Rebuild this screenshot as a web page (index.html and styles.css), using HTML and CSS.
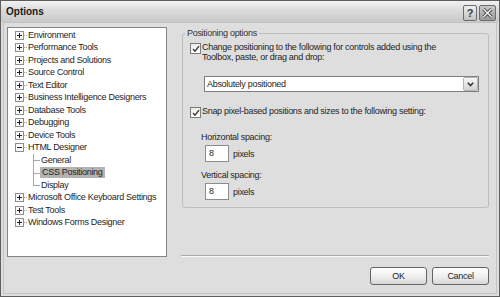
FILE: index.html
```html
<!DOCTYPE html>
<html>
<head>
    <meta charset="utf-8"/>
    <title>Options</title>
    <link rel="stylesheet" href="styles.css">
</head>
<body>
<div class="window">
    <div class="titlebar">
        <span class="title">Options</span>
        <div class="captionButtons">
            <span class="capBtn help">?</span>
            <span class="capBtn close">
                <svg width="11" height="10" viewBox="0 0 11 10">
                    <path d="M1.5 1 L9.5 9 M9.5 1 L1.5 9" stroke="#4a4a4a" stroke-width="3.2" fill="none"/>
                    <path d="M1.5 1 L9.5 9 M9.5 1 L1.5 9" stroke="#f4f4f4" stroke-width="1.4" fill="none"/>
                </svg>
            </span>
        </div>
    </div>

    <div class="client">
        <div class="mainRow">
            <div class="tree">
                <div class="node"><span class="exp plus"></span><span class="stub"></span><span class="label">Environment</span></div>
                <div class="node"><span class="exp plus"></span><span class="stub"></span><span class="label">Performance Tools</span></div>
                <div class="node"><span class="exp plus"></span><span class="stub"></span><span class="label">Projects and Solutions</span></div>
                <div class="node"><span class="exp plus"></span><span class="stub"></span><span class="label">Source Control</span></div>
                <div class="node"><span class="exp plus"></span><span class="stub"></span><span class="label">Text Editor</span></div>
                <div class="node"><span class="exp plus"></span><span class="stub"></span><span class="label">Business Intelligence Designers</span></div>
                <div class="node"><span class="exp plus"></span><span class="stub"></span><span class="label">Database Tools</span></div>
                <div class="node"><span class="exp plus"></span><span class="stub"></span><span class="label">Debugging</span></div>
                <div class="node"><span class="exp plus"></span><span class="stub"></span><span class="label">Device Tools</span></div>
                <div class="node"><span class="exp minus"></span><span class="stub"></span><span class="label">HTML Designer</span></div>
                <div class="node child"><span class="label">General</span></div>
                <div class="node child"><span class="label selected">CSS Positioning</span></div>
                <div class="node child last"><span class="label">Display</span></div>
                <div class="node"><span class="exp plus"></span><span class="stub"></span><span class="label">Microsoft Office Keyboard Settings</span></div>
                <div class="node"><span class="exp plus"></span><span class="stub"></span><span class="label">Test Tools</span></div>
                <div class="node"><span class="exp plus"></span><span class="stub"></span><span class="label">Windows Forms Designer</span></div>
            </div>

            <div class="pane">
                <fieldset class="group">
                    <legend>Positioning options</legend>
                    <div class="checkRow">
                        <span class="check"><svg width="8" height="8" viewBox="0 0 8 8"><path d="M1 4 L3 6.2 L7 1.2" stroke="#333" stroke-width="1.3" fill="none"/></svg></span>
                        <span class="checkText">Change positioning to the following for controls added using the<br>Toolbox, paste, or drag and drop:</span>
                    </div>
                    <div class="combo">
                        <span class="comboText">Absolutely positioned</span>
                        <span class="comboArrow"><svg width="7" height="5" viewBox="0 0 7 5"><path d="M0.8 0.8 L3.5 3.6 L6.2 0.8" stroke="#333" stroke-width="1.5" fill="none"/></svg></span>
                    </div>
                    <div class="checkRow second">
                        <span class="check"><svg width="8" height="8" viewBox="0 0 8 8"><path d="M1 4 L3 6.2 L7 1.2" stroke="#333" stroke-width="1.3" fill="none"/></svg></span>
                        <span class="checkText">Snap pixel-based positions and sizes to the following setting:</span>
                    </div>
                    <div class="fieldLabel">Horizontal spacing:</div>
                    <div class="spinRow">
                        <span class="numBox">8</span>
                        <span>pixels</span>
                    </div>
                    <div class="fieldLabel vertical">Vertical spacing:</div>
                    <div class="spinRow">
                        <span class="numBox">8</span>
                        <span>pixels</span>
                    </div>
                </fieldset>
                <div class="separator"></div>
            </div>
        </div>

        <div class="footer">
            <span class="button">OK</span>
            <span class="button">Cancel</span>
        </div>
    </div>
</div>
</body>
</html>
```

FILE: styles.css
```css
* {
    box-sizing: border-box;
}

body {
    margin: 0;
    background: #e0e0e0;
    font-family: "Liberation Sans", sans-serif;
    font-size: 9px;
    letter-spacing: -0.3px;
    color: #1e1e1e;
}

/* window frame */
.window {
    width: 500px;
    height: 297px;
    border: 1px solid #5e5e5e;
    background: #dedede;
    display: flex;
    flex-direction: column;
}

.titlebar {
    height: 21px;
    display: flex;
    align-items: center;
    justify-content: space-between;
    padding: 0 3px 0 5px;
    background: linear-gradient(#f2f2f2, #dadada 45%, #c9c9c9);
}

.title {
    font-weight: bold;
    font-size: 10px;
    letter-spacing: 0;
    color: #1a1a1a;
}

.captionButtons {
    display: flex;
    gap: 2px;
    margin-top: 2px;
}

.capBtn {
    height: 16px;
    border: 1px solid #6c6c6c;
    border-radius: 2px;
    display: flex;
    align-items: center;
    justify-content: center;
}

.help {
    width: 14px;
    background: linear-gradient(#efefef, #c2c2c2);
    font-weight: bold;
    font-size: 11px;
    color: #3a3a3a;
}

.close {
    width: 17px;
    background: linear-gradient(#c9c9c9, #9a9a9a);
}

.client {
    flex: 1;
    margin: 0 2px 2px;
    border: 1px solid #c2c2c2;
    padding: 4px 7px 0 3px;
}

.mainRow {
    display: flex;
    height: 230px;
}

/* options tree */
.tree {
    width: 160px;
    border: 1px solid #858585;
    background: #fff;
    padding: 1px 0 0 7px;
}

.node {
    height: 12.5px;
    display: flex;
    align-items: center;
    position: relative;
    white-space: nowrap;
}

.exp {
    width: 9px;
    height: 9px;
    border: 1px solid #8e8e8e;
    background: #fbfbfb;
    position: relative;
}

.exp::before {
    content: "";
    position: absolute;
    left: 1px;
    top: 3px;
    width: 5px;
    height: 1px;
    background: #222;
}

.exp.plus::after {
    content: "";
    position: absolute;
    left: 3px;
    top: 1px;
    width: 1px;
    height: 5px;
    background: #222;
}

.stub {
    width: 3px;
    border-top: 1px dotted #a0a0a0;
}

.label {
    padding: 0 1px;
    line-height: 11px;
}

.node.child {
    padding-left: 25px;
}

.node.child::before {
    content: "";
    position: absolute;
    left: 18px;
    top: 0;
    height: 12.5px;
    border-left: 1px solid #a8a8a8;
}

.node.child.last::before {
    height: 6px;
}

.node.child::after {
    content: "";
    position: absolute;
    left: 18px;
    top: 6px;
    width: 7px;
    border-top: 1px solid #a8a8a8;
}

.label.selected {
    background: #b3b3b3;
    padding: 0 2px;
}

/* right side */
.pane {
    flex: 1;
    margin-left: 14px;
    display: flex;
    flex-direction: column;
    justify-content: space-between;
}

.group {
    margin: 1px 0 0 1px;
    padding: 3px 9px 7px 7px;
    border: 1px solid #bdbdbd;
    border-radius: 3px;
    min-width: 0;
}

.group legend {
    margin-left: -5px;
    padding: 0 2px;
    line-height: 11px;
    color: #333;
}

.checkRow {
    display: flex;
    align-items: flex-start;
}

.check {
    width: 11px;
    height: 11px;
    margin-top: 1px;
    border: 1px solid #7c7c7c;
    background: linear-gradient(#ececec, #ffffff);
    display: flex;
    align-items: center;
    justify-content: center;
    flex-shrink: 0;
}

.checkText {
    margin-left: 1px;
    line-height: 10px;
    white-space: nowrap;
}

.checkRow.second {
    margin-top: 14px;
}

.combo {
    margin: 14px 0 0 14px;
    height: 16px;
    border: 1px solid #7f7f7f;
    background: #fff;
    display: flex;
    align-items: center;
    justify-content: space-between;
}

.comboText {
    padding-left: 2px;
}

.comboArrow {
    width: 15px;
    height: 14px;
    border: 1px solid #b4b4b4;
    border-radius: 2px;
    background: linear-gradient(#f7f7f7, #d4d4d4);
    display: flex;
    align-items: center;
    justify-content: center;
}

.fieldLabel {
    margin: 14px 0 0 11px;
    line-height: 10px;
}

.fieldLabel.vertical {
    margin-top: 8px;
}

.spinRow {
    display: flex;
    align-items: center;
    gap: 4px;
    margin: 3px 0 0 15px;
}

.numBox {
    width: 24px;
    height: 17px;
    border: 1px solid #8c8c8c;
    background: #fff;
    padding-left: 3px;
    line-height: 15px;
}

.separator {
    height: 2px;
    border-top: 1px solid #ababab;
    border-bottom: 1px solid #fafafa;
}

/* dialog buttons */
.footer {
    display: flex;
    justify-content: flex-end;
    gap: 5px;
    padding-top: 10px;
}

.button {
    width: 57px;
    height: 18px;
    border: 1px solid #646464;
    border-radius: 3px;
    background: linear-gradient(#ffffff, #ececec 60%, #d6d6d6);
    display: flex;
    align-items: center;
    justify-content: center;
}
```
